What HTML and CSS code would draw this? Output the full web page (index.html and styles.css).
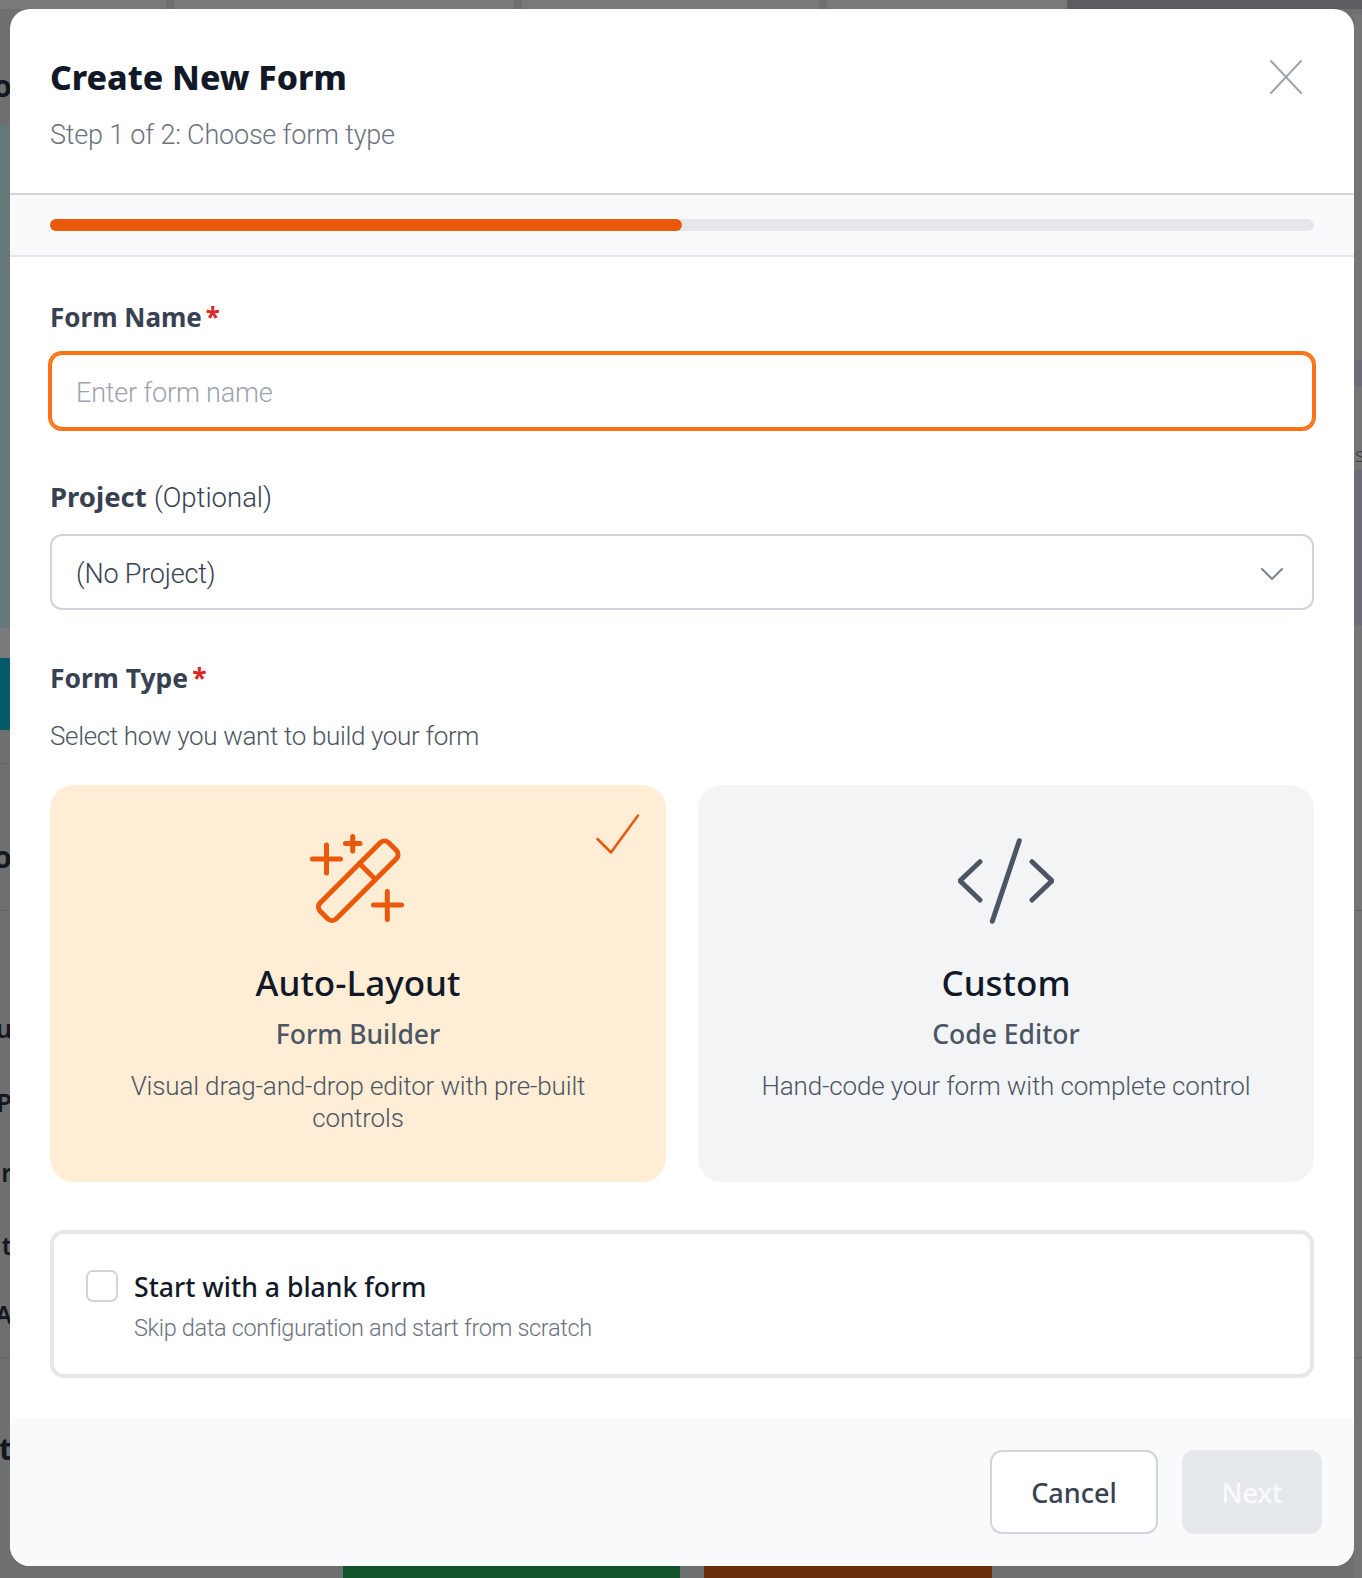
FILE: index.html
```html
<!DOCTYPE html>
<html lang="en">
<head>
    <meta charset="UTF-8">
    <meta name="viewport" content="width=device-width, initial-scale=1.0">
    <title>Create New Form</title>
    <link rel="stylesheet" href="styles.css">
</head>
<body>

    <div class="backdrop">
        <div class="bg-block bg-top-a"></div>
        <div class="bg-block bg-top-b"></div>
        <div class="bg-block bg-top-c"></div>
        <div class="bg-block bg-top-e"></div>
        <div class="bg-block bg-top-d"></div>
        <div class="bg-block bg-left-image"></div>
        <div class="bg-block bg-left-light"></div>
        <div class="bg-block bg-left-teal"></div>
        <div class="bg-block bg-right"></div>
        <div class="bg-block bg-right-purple-a"></div>
        <div class="bg-block bg-right-purple-b"></div>
        <div class="bg-block bg-line line-a"></div>
        <div class="bg-block bg-line line-b"></div>
        <div class="bg-block bg-line line-c"></div>
        <div class="bg-block bg-line line-d"></div>
        <div class="bg-block bg-bottom-green"></div>
        <div class="bg-block bg-bottom-brown"></div>
        <span class="bg-text big text-a">o</span>
        <span class="bg-text big text-b">o</span>
        <span class="bg-text text-c">u</span>
        <span class="bg-text text-d">P</span>
        <span class="bg-text text-e">r</span>
        <span class="bg-text text-f">t</span>
        <span class="bg-text text-g">A</span>
        <span class="bg-text big text-h">t</span>
        <span class="bg-text text-s">s</span>
    </div>

    <div class="modal">
        <div class="modal-header">
            <div>
                <h2>Create New Form</h2>
                <p class="step-text">Step 1 of 2: Choose form type</p>
            </div>
            <svg class="close-icon" viewBox="0 0 32 36" fill="none" stroke="#9ca3af" stroke-width="2" stroke-linecap="round">
                <path d="M1 2L31 34M31 2L1 34"/>
            </svg>
        </div>

        <div class="progress-strip">
            <div class="progress-track">
                <div class="progress-fill" style="width: 50%"></div>
            </div>
        </div>

        <div class="modal-body">
            <label class="field-label name-label">Form Name<span class="required">*</span></label>
            <div class="text-input">Enter form name</div>

            <label class="field-label project-label">Project <span class="optional">(Optional)</span></label>
            <div class="select-input">
                <span>(No Project)</span>
                <svg class="chevron" viewBox="0 0 24 14" fill="none" stroke="#7b8390" stroke-width="2" stroke-linecap="round" stroke-linejoin="round">
                    <path d="M2 2l10 10L22 2"/>
                </svg>
            </div>

            <label class="field-label type-label">Form Type<span class="required">*</span></label>
            <p class="type-hint">Select how you want to build your form</p>

            <div class="type-grid">
                <div class="type-card selected">
                    <svg class="card-check" viewBox="0 0 44 42" fill="none" stroke="#ea580c" stroke-width="2.500" stroke-linecap="round" stroke-linejoin="round">
                        <path d="M1.500 25L15 38.500L42 1.500"/>
                    </svg>
                    <svg class="card-icon" viewBox="0 0 96 96" fill="none" stroke="#ea580c" stroke-width="5" stroke-linecap="round" stroke-linejoin="round">
                        <path d="M2.500 27h28M16.500 13v28M35.500 11.500h14.500M42.700 4.500v14.500M63.500 73h28M77.300 59.500v28"/>
                        <path d="M10 71L70.500 10.500a6 6 0 0 1 8 0l8 8a6 6 0 0 1 0 8L26 87a6 6 0 0 1-8 0l-8-8a6 6 0 0 1 0-8z"/>
                        <path d="M49.500 31.500l16 16"/>
                    </svg>
                    <h3>Auto-Layout</h3>
                    <h4>Form Builder</h4>
                    <p>Visual drag-and-drop editor with pre-built controls</p>
                </div>
                <div class="type-card">
                    <svg class="card-icon" viewBox="0 0 96 96" fill="none" stroke="#4b5563" stroke-width="5" stroke-linecap="round" stroke-linejoin="round">
                        <path d="M22 29.700L2 48.700l20 19.300M74 29.700l20 19-20 19.300M61.300 8.700L34.300 89.300"/>
                    </svg>
                    <h3>Custom</h3>
                    <h4>Code Editor</h4>
                    <p>Hand-code your form with complete control</p>
                </div>
            </div>

            <div class="blank-option">
                <span class="checkbox"></span>
                <div>
                    <div class="blank-title">Start with a blank form</div>
                    <div class="blank-sub">Skip data configuration and start from scratch</div>
                </div>
            </div>
        </div>

        <div class="modal-footer">
            <button class="btn-cancel">Cancel</button>
            <button class="btn-next">Next</button>
        </div>
    </div>

</body>
</html>
```
FILE: styles.css
```css
* {
    box-sizing: border-box;
}

html, body {
    height: 100%;
}

body {
    margin: 0;
    overflow: hidden;
    position: relative;
    background-color: #6e6f71;
    font-family: Roboto, "Noto Sans", sans-serif;
    font-weight: 300;
}

.bg-block {
    position: absolute;
}

.bg-top-a { left: 0; top: 0; width: 166px; height: 9px; background-color: #78797b; }
.bg-top-b { left: 174px; top: 0; width: 340px; height: 9px; background-color: #78797b; }
.bg-top-c { left: 522px; top: 0; width: 297px; height: 9px; background-color: #78797b; }
.bg-top-e { left: 827px; top: 0; width: 240px; height: 9px; background-color: #78797b; }
.bg-top-d { left: 1067px; top: 0; width: 295px; height: 9px; background-color: #5c5d61; }
.bg-left-image { left: 0; top: 125px; width: 10px; height: 503px; background-color: #65787a; }
.bg-left-light { left: 0; top: 628px; width: 10px; height: 30px; background-color: #7a7a7a; }
.bg-left-teal { left: 0; top: 658px; width: 10px; height: 72px; background-color: #045a68; }
.bg-right { left: 1354px; top: 14px; width: 8px; height: 1564px; background-color: #747576; }
.bg-right-purple-a { left: 1354px; top: 360px; width: 8px; height: 26px; background-color: #6e6a78; }
.bg-right-purple-b { left: 1354px; top: 470px; width: 8px; height: 155px; background-color: #6e6a78; }
.bg-bottom-green { left: 343px; top: 1566px; width: 337px; height: 12px; background-color: #11532b; }
.bg-bottom-brown { left: 704px; top: 1566px; width: 288px; height: 12px; background-color: #68300a; }

.bg-line {
    height: 1px;
    background-color: #636466;
}

.line-a { left: 0; top: 763px; width: 10px; }
.line-b { left: 0; top: 910px; width: 10px; }
.line-c { left: 0; top: 1357px; width: 1362px; }
.line-d { left: 1354px; top: 910px; width: 8px; }

/* letters of the page behind the overlay, cut off by the modal */
.bg-text {
    position: absolute;
    right: calc(100% - 12px);
    font-family: "Noto Sans", sans-serif;
    font-size: 25px;
    line-height: 32px;
    font-weight: 600;
    color: #14171e;
}

.bg-text.big {
    font-size: 30px;
    line-height: 40px;
    font-weight: 700;
}

.text-a { top: 66px; }
.text-b { top: 837px; }
.text-c { top: 1012px; }
.text-d { top: 1086px; }
.text-e { top: 1156px; }
.text-f { top: 1229px; }
.text-g { top: 1298px; }
.text-h { top: 1429px; }

.text-s {
    left: 1355px;
    right: auto;
    top: 439px;
    font-size: 20px;
    font-weight: 300;
    color: #3b3c42;
}

.modal {
    position: absolute;
    left: 10px;
    top: 9px;
    width: 1344px;
    height: 1557px;
    display: flex;
    flex-direction: column;
    background-color: white;
    border-radius: 20px;
    overflow: hidden;
}

.modal-header {
    display: flex;
    justify-content: space-between;
    height: 184px;
    padding: 46px 40px 0;
}

h2 {
    margin: 0;
    font-family: "Noto Sans", sans-serif;
    font-size: 33.800px;
    line-height: 44px;
    font-weight: 800;
    color: #111827;
}

.step-text {
    margin: 18px 0 0;
    font-size: 27px;
    letter-spacing: -0.2px;
    line-height: 36px;
    color: #6b7280;
}

.close-icon {
    width: 32px;
    height: 36px;
    margin: 4px 12px 0 0;
}

.progress-strip {
    height: 64px;
    padding: 24px 40px 0;
    background-color: #f9fafb;
    border-top: 2px solid #d1d5db;
    border-bottom: 2px solid #e5e7eb;
}

.progress-track {
    height: 12px;
    background-color: #e5e7eb;
    border-radius: 6px;
}

.progress-fill {
    height: 100%;
    background-color: #ea580c;
    border-radius: 6px;
}

.modal-body {
    flex: 1;
    padding: 0 40px;
}

.field-label {
    display: block;
    font-family: "Noto Sans", sans-serif;
    font-size: 26.500px;
    line-height: 36px;
    font-weight: 700;
    color: #374151;
}

.name-label { margin-top: 42px; font-size: 26px; }
.project-label { margin-top: 50px; font-size: 27.500px; }
.type-label { margin-top: 50px; }

.required {
    margin-left: 4px;
    color: #dc2626;
}

.optional {
    font-family: Roboto, sans-serif;
    font-size: 27.500px;
    font-weight: 300;
}

.text-input, .select-input {
    display: flex;
    align-items: center;
    height: 76px;
    padding: 3px 24px 0;
    font-size: 27px;
    letter-spacing: -0.2px;
    border-radius: 12px;
}

.text-input {
    margin-top: 18px;
    color: #9ca3af;
    border: 2px solid #f97316;
    box-shadow: 0 0 0 2px #f97316;
}

.select-input {
    margin-top: 18px;
    justify-content: space-between;
    color: #374151;
    border: 2px solid #d1d5db;
}

.chevron {
    width: 24px;
    height: 14px;
    margin-right: 4px;
}

.type-hint {
    margin: 23px 0 0;
    font-size: 26px;
    letter-spacing: -0.35px;
    line-height: 34px;
    color: #4b5563;
}

.type-grid {
    display: grid;
    grid-template-columns: 1fr 1fr;
    gap: 32px;
    margin-top: 32px;
}

.type-card {
    position: relative;
    height: 397px;
    padding: 47px 40px 0;
    text-align: center;
    background-color: #f3f4f6;
    border-radius: 24px;
}

.type-card.selected {
    background-color: #ffedd5;
}

.card-check {
    position: absolute;
    top: 29px;
    right: 26px;
    width: 44px;
    height: 42px;
}

.card-icon {
    display: block;
    width: 96px;
    height: 96px;
    margin: 0 auto;
}

.type-card h3 {
    margin: 31px 0 0;
    font-family: "Noto Sans", sans-serif;
    font-size: 35px;
    line-height: 48px;
    font-weight: 500;
    color: #111827;
}

.type-card h4 {
    margin: 9px 0 0;
    font-family: "Noto Sans", sans-serif;
    font-size: 26.500px;
    line-height: 36px;
    font-weight: 500;
    color: #4b5563;
}

.type-card p {
    margin: 18px 0 0;
    font-size: 26px;
    letter-spacing: -0.15px;
    line-height: 32px;
    color: #4b5563;
}

.blank-option {
    display: flex;
    gap: 16px;
    height: 148px;
    margin-top: 48px;
    padding: 36px 32px 0;
    border: 4px solid #e5e7eb;
    border-radius: 14px;
}

.checkbox {
    flex-shrink: 0;
    width: 32px;
    height: 32px;
    background-color: white;
    border: 2px solid #d1d5db;
    border-radius: 7px;
}

.blank-title {
    margin-top: -1px;
    font-family: "Noto Sans", sans-serif;
    font-size: 26.600px;
    line-height: 36px;
    font-weight: 500;
    color: #111827;
}

.blank-sub {
    margin-top: 7px;
    font-size: 23.500px;
    letter-spacing: -0.33px;
    line-height: 32px;
    color: #6b7280;
}

.modal-footer {
    display: flex;
    justify-content: flex-end;
    gap: 24px;
    height: 148px;
    padding: 32px 32px 0;
    background-color: #f9fafb;
}

.modal-footer button {
    height: 84px;
    font-family: "Noto Sans", sans-serif;
    font-size: 27px;
    font-weight: 500;
    border-radius: 12px;
}

.btn-cancel {
    width: 168px;
    color: #374151;
    background-color: white;
    border: 2px solid #d1d5db;
}

.btn-next {
    width: 140px;
    color: #f9fafb;
    background-color: #e6e9ec;
    border: none;
}
```
